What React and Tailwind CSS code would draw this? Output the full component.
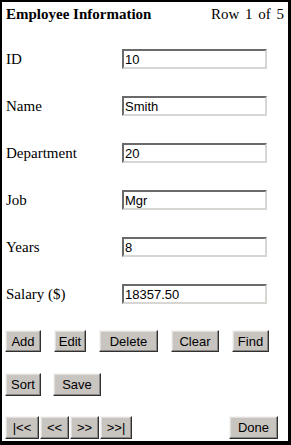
import React from "react";

const serif = { fontFamily: '"Liberation Serif", "Times New Roman", serif' };
const sans = { fontFamily: '"Liberation Sans", Arial, sans-serif' };

function Btn({ w, h = "h-[22px]", children }) {
  return (
    <button
      style={sans}
      className={`${w} ${h} flex items-center justify-center bg-[#c8c4c0] text-[13px] leading-none text-black border border-t-[#f4f4f4] border-l-[#f4f4f4] border-b-[#303030] border-r-[#303030] shadow-[inset_-1px_-1px_0_#8a8784,inset_1px_1px_0_#e2dfdc] p-0`}
    >
      {children}
    </button>
  );
}

function Field({ label, value }) {
  return (
    <div className="flex items-center h-[20px]">
      <div style={serif} className="w-[116px] text-[15px] leading-[17px] text-black">
        {label}
      </div>
      <div
        style={sans}
        className="w-[145px] h-[20px] flex items-center bg-white border-2 border-t-[#6a6a6a] border-l-[#6a6a6a] border-b-[#d8d6d2] border-r-[#d8d6d2] pl-px text-[13px] leading-none text-black"
      >
        {value}
      </div>
    </div>
  );
}

export default function App() {
  return (
    <div className="w-[291px] h-[445px] bg-white border-l-2 border-t-2 border-r-[3px] border-b-[4px] border-black flex flex-col pl-1 pr-[2px] box-border">
      <div className="flex justify-between items-center h-[17px] mt-[4px]">
        <span style={serif} className="font-bold text-[15px] leading-[17px] text-black">
          Employee Information
        </span>
        <span style={serif} className="text-[15px] leading-[17px] text-black pr-[2px] [word-spacing:2px]">
          Row 1 of 5
        </span>
      </div>
      <div className="flex flex-col gap-[27px] mt-[26px]">
        <Field label="ID" value="10" />
        <Field label="Name" value="Smith" />
        <Field label="Department" value="20" />
        <Field label="Job" value="Mgr" />
        <Field label="Years" value="8" />
        <Field label="Salary ($)" value="18357.50" />
      </div>
      <div className="flex gap-[13px] mt-[26px] -ml-px">
        <Btn w="w-[36px]">Add</Btn>
        <Btn w="w-[32px]">Edit</Btn>
        <Btn w="w-[59px]">Delete</Btn>
        <Btn w="w-[48px]">Clear</Btn>
        <Btn w="w-[37px]">Find</Btn>
      </div>
      <div className="flex gap-[12px] mt-[21px] -ml-px">
        <Btn w="w-[36px]" h="h-[23px]">Sort</Btn>
        <Btn w="w-[48px]" h="h-[23px]">Save</Btn>
      </div>
      <div className="flex mt-[20px] -ml-px">
        <div className="flex gap-px">
          <Btn w="w-[34px]" h="h-[23px]">|&lt;&lt;</Btn>
          <Btn w="w-[29px]" h="h-[23px]">&lt;&lt;</Btn>
          <Btn w="w-[29px]" h="h-[23px]">&gt;&gt;</Btn>
          <Btn w="w-[32px]" h="h-[23px]">&gt;&gt;|</Btn>
        </div>
        <div className="ml-[97px]">
          <Btn w="w-[49px]" h="h-[23px]">Done</Btn>
        </div>
      </div>
    </div>
  );
}
